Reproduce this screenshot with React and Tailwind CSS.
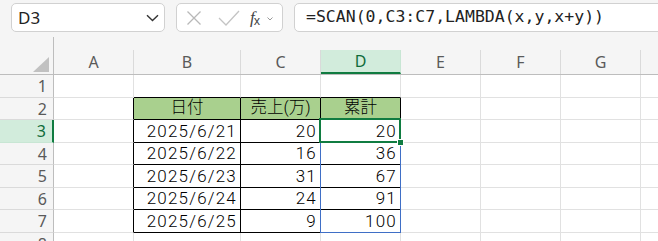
import React from "react";

const COLS = [
  { key: "A", w: "w-[80px]" },
  { key: "B", w: "w-[107px]" },
  { key: "C", w: "w-[80px]" },
  { key: "D", w: "w-[80px]" },
  { key: "E", w: "w-[80px]" },
  { key: "F", w: "w-[80px]" },
  { key: "G", w: "w-[80px]" },
  { key: "H", w: "w-[30px]" },
];

const ROW_H = ["h-[23px]", "h-[22px]", "h-[23px]", "h-[22px]", "h-[23px]", "h-[22px]", "h-[23px]", "h-[23px]"];

const DATA = {
  2: { B: ["日付", "c"], C: ["売上(万)", "c"], D: ["累計", "c"] },
  3: { B: ["2025/6/21", "r"], C: ["20", "r"], D: ["20", "r"] },
  4: { B: ["2025/6/22", "r"], C: ["16", "r"], D: ["36", "r"] },
  5: { B: ["2025/6/23", "r"], C: ["31", "r"], D: ["67", "r"] },
  6: { B: ["2025/6/24", "r"], C: ["24", "r"], D: ["91", "r"] },
  7: { B: ["2025/6/25", "r"], C: ["9", "r"], D: ["100", "r"] },
};

const cellFont = { fontFamily: 'Roboto, "Noto Sans CJK JP", sans-serif', fontVariantNumeric: "tabular-nums" };
const formulaFont = { fontFamily: '"DejaVu Sans Mono", monospace' };
const uiFont = { fontFamily: '"Noto Sans", "Open Sans", sans-serif' };

function Cell({ r, c, w, h }) {
  const inTable = r >= 2 && r <= 7 && ["B", "C", "D"].includes(c);
  const leftOfTable = c === "A" && r >= 2 && r <= 7;
  const aboveTable = r === 1 && ["B", "C", "D"].includes(c);
  const rightBorder = inTable || leftOfTable ? "border-r-black" : "border-r-[#e1e1e1]";
  const bottomBorder = inTable || aboveTable ? "border-b-black" : "border-b-[#e1e1e1]";
  const bg = r === 2 && inTable ? "bg-[#a9d08e]" : "bg-white";
  const d = DATA[r] && DATA[r][c];
  const header = d && d[1] === "c";
  const align = header
    ? "justify-center text-[16.5px] font-light"
    : "justify-end pr-[3px] text-[17px] font-light tracking-[1.2px]";
  return (
    <div
      className={`${w} ${h} shrink-0 border-r border-b ${rightBorder} ${bottomBorder} ${bg} flex items-center ${align} leading-none text-black overflow-hidden whitespace-nowrap`}
      style={cellFont}
    >
      {d ? d[0] : null}
    </div>
  );
}

export default function App() {
  return (
    <div className="relative w-[658px] h-[241px] overflow-hidden bg-[#f5f5f5]">
      {/* Formula bar */}
      <div className="h-[37px] flex items-start pt-[3px] pl-[11px] gap-[11px]">
        <div className="w-[154px] h-[29px] shrink-0 bg-white border border-[#d1d1d1] rounded-[5px] flex items-center justify-between pl-[6px] pr-[5px]">
          <span className="text-[17px] text-[#222]" style={uiFont}>D3</span>
          <svg width="13" height="8" viewBox="0 0 13 8" className="mt-[1px]">
            <path d="M1 1.2 L6.5 6.5 L12 1.2" fill="none" stroke="#333" strokeWidth="1.4" />
          </svg>
        </div>
        <div className="w-[107px] h-[29px] shrink-0 bg-white border border-[#d1d1d1] rounded-[5px] flex items-center pl-[9px]">
          <svg width="16" height="16" viewBox="0 0 16 16">
            <path d="M1.5 1.5 L14.5 14.5 M14.5 1.5 L1.5 14.5" stroke="#b8b8b8" strokeWidth="1.3" fill="none" />
          </svg>
          <svg width="22" height="16" viewBox="0 0 22 16" className="ml-[16px]">
            <path d="M1 8 L8 15 L21 1" stroke="#c4c4c4" strokeWidth="1.3" fill="none" />
          </svg>
          <span className="ml-[10px] flex items-end text-[#444] leading-none">
            <span className="italic text-[17px]" style={{ fontFamily: '"Liberation Serif", serif' }}>f</span>
            <span className="text-[12px] -ml-[1px] mb-[-1px]" style={uiFont}>x</span>
          </span>
          <svg width="6" height="4" viewBox="0 0 6 4" className="ml-[7px] mt-[2px]">
            <path d="M0.5 0.5 L3 3 L5.5 0.5" stroke="#999" strokeWidth="1" fill="none" />
          </svg>
        </div>
        <div className="w-[400px] h-[29px] shrink-0 bg-white border border-[#d1d1d1] rounded-l-[5px] flex items-center pl-[11px]">
          <span className="text-[16.5px] text-[#222] whitespace-nowrap" style={formulaFont}>
            =SCAN(0,C3:C7,LAMBDA(x,y,x+y))
          </span>
        </div>
      </div>

      {/* Column header row */}
      <div className="flex h-[38px] border-b border-[#bdbdbd]">
        <div className="w-[54px] shrink-0 border-r border-[#bdbdbd] relative flex items-end justify-end pr-[4px] pb-[2px]">
          <svg width="16" height="15" viewBox="0 0 16 15">
            <path d="M16 0 L16 15 L0 15 Z" fill="#c1c1c1" />
          </svg>
        </div>
        {COLS.map((col) => {
          const sel = col.key === "D";
          return (
            <div key={col.key} className={`${col.w} shrink-0 flex items-end`}>
              <div
                className={`w-full h-[24px] border-r ${sel ? "border-r-[#c8e6d4] bg-[#d2ecdc] border-b-2 border-b-[#107c41] text-[#0f6b3a]" : "border-r-[#dadada] text-[#5a5a5a]"} flex items-center justify-center text-[16px] leading-none`}
                style={uiFont}
              >
                {col.key === "H" ? "" : col.key}
              </div>
            </div>
          );
        })}
      </div>

      {/* Rows */}
      {ROW_H.map((h, i) => {
        const r = i + 1;
        const sel = r === 3;
        return (
          <div key={r} className="flex">
            <div
              className={`w-[54px] ${h} shrink-0 border-b flex items-center justify-end pr-[6px] text-[16px] leading-none ${sel ? "bg-[#d2ecdc] border-r-2 border-r-[#107c41] border-b-[#c8e6d4] text-[#0f6b3a]" : "bg-[#f5f5f5] border-r border-r-[#bdbdbd] border-b-[#dadada] text-[#5a5a5a]"}`}
              style={uiFont}
            >
              {r}
            </div>
            {COLS.map((col) => (
              <Cell key={col.key} r={r} c={col.key} w={col.w} h={h} />
            ))}
          </div>
        );
      })}

      {/* Spill range border */}
      <div className="absolute left-[320px] top-[119px] w-[81px] h-[114px] border border-[#3f6fc6] pointer-events-none" />
      {/* Active cell border */}
      <div className="absolute left-[319px] top-[118px] w-[82px] h-[25px] border-2 border-[#107c41] pointer-events-none" />
      {/* Fill handle */}
      <div className="absolute left-[397px] top-[139px] w-[7px] h-[7px] bg-[#107c41] border border-white" />
    </div>
  );
}
